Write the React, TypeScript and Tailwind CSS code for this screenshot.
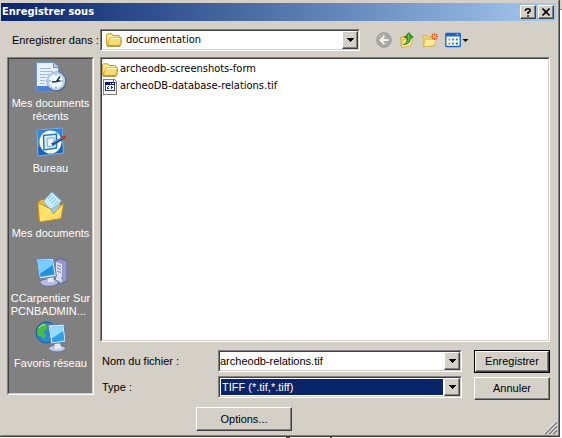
import React, { useState } from "react";

const sunken =
  "border border-t-[#808080] border-l-[#808080] border-r-white border-b-white";
const sunkenInner =
  "border border-t-[#404040] border-l-[#404040] border-r-[#d4d0c8] border-b-[#d4d0c8] bg-white";
const raised =
  "border border-t-white border-l-white border-r-[#404040] border-b-[#404040] bg-[#d4d0c8] shadow-[inset_-1px_-1px_0_#808080]";
const smallText = "font-['Liberation_Sans',Arial,sans-serif] text-[11px]";
const wideText =
  "font-['DejaVu_Sans_Condensed','DejaVu_Sans',Tahoma,sans-serif] text-[11px]";

function FolderIcon() {
  return (
    <svg width="16" height="16" viewBox="0 0 16 16" aria-hidden="true" className="shrink-0">
      <path d="M.6 3.2Q.6 1.8 2 1.8h3.6l1.6 1.7h5.6q1 0 1 1v1.2h1.4q.7 0 .6.8l-1 6.6q-.1 1-1.2 1H2q-1.4 0-1.4-1.4Z" fill="#e9bd3d" stroke="#b88a1c" strokeWidth=".8" />
      <path d="M1.2 3.3q0-.8.8-.8h3.3L7 4.2h6v1.500H4L1.4 11Z" fill="#fff0a0" />
      <path d="M3.7 5.8h11.5L14 12.7q-.1.7-.8.7H1.6Z" fill="#fbdc70" stroke="#c99c2c" strokeWidth=".6" />
      <path d="M4.4 6.500h9.9" stroke="#fff8c8" />
      <path d="M1 14.2h12.6" stroke="#8d6b18" strokeWidth=".8" />
    </svg>
  );
}

function TifIcon() {
  return (
    <svg width="16" height="16" viewBox="0 0 16 16" aria-hidden="true" className="shrink-0" shapeRendering="crispEdges">
      <path d="M1 0h11l3 3v13H1Z" fill="#808080" />
      <path d="M2 1h9v3h3v11H2Z" fill="#f6f6f4" />
      <path d="M12 1v2h2Z" fill="#fff" />
      <path d="M3 3h10v9H3Z" fill="#3c4358" />
      <path d="M4 6h8v5H4Z" fill="#fff" />
      <path d="M3 3h10v3H3Z" fill="#11157c" />
      <path d="M8 4h1v1H8Zm2 0h2v1h-2Z" fill="#fff" />
      <path d="M5 8h1v2H5Zm1-1h1v1H6Zm0 2h1v1H6Zm3-2h1v3H9Zm1 1h1v1h-1Z" fill="#20268d" />
    </svg>
  );
}

function BackIcon() {
  return (
    <svg width="16" height="16" viewBox="0 0 16 16" aria-hidden="true">
      <circle cx="8" cy="8" r="7.2" fill="#a9a8a5" stroke="#93928f" />
      <path d="M3 5q2-3.5 6-3.2" stroke="#c6c5c2" fill="none" />
      <path d="M8.5 4 4.5 8l4 4M5 8h7.5" stroke="#f3f2ef" strokeWidth="1.8" fill="none" />
    </svg>
  );
}

function UpIcon() {
  return (
    <svg width="16" height="16" viewBox="0 0 16 16" aria-hidden="true">
      <path d="M1.5 5.5 5 4l1.3 1.2L12 5v8.5l-9.6 1.7Z" fill="#f6d561" stroke="#c39c2f" strokeWidth=".7" />
      <path d="M4.5 7.5 13.500 7l-2 7-9.200 1.2Z" fill="#ffec92" stroke="#d1aa40" strokeWidth=".6" />
      <path d="M4.5 12.5q4-.5 3.5-7H5.3L9.8.7l4.3 4.7h-2.8q.3 7-6.8 7.1Z" fill="#32a629" stroke="#176b17" strokeWidth=".8" />
      <path d="M9.7 2.5v5q-.4 3-2.2 4" stroke="#77d45e" fill="none" />
    </svg>
  );
}

function NewFolderIcon() {
  return (
    <svg width="16" height="16" viewBox="0 0 16 16" aria-hidden="true">
      <path d="M.7 3.500h4.5l1.2 1.6h5.7V14L1.5 14.6Z" fill="#efd069" stroke="#d2aa49" strokeWidth=".7" />
      <path d="M3.4 7.3H14l-2.3 6.5-10 .8Z" fill="#ffec9c" stroke="#d2b34f" strokeWidth=".7" />
      <path d="M12.5 1v7M9 4.5h7M10 2l5 5m0-5-5 5" stroke="#e45a26" strokeWidth="1.2" />
      <circle cx="12.5" cy="4.5" r="1.5" fill="#ffc76a" />
    </svg>
  );
}

function ViewIcon() {
  return (
    <svg width="24" height="16" viewBox="0 0 24 16" aria-hidden="true">
      <rect x=".8" y="1.5" width="14.4" height="13" rx=".6" fill="#fff" stroke="#1767ca" strokeWidth="1.4" />
      <path d="M1 1h14v3.5H1Z" fill="#1767ca" />
      <path d="M11.5 2.5h2" stroke="#8ec2ff" />
      <path d="M3.5 6.5h2v2h-2z" fill="#8497ac" />
      <path d="M7 6.5h2v2H7z" fill="#4e82d2" />
      <path d="M10.8 6.5h2v2h-2z" fill="#2c9b5a" />
      <path d="M3.5 10.5h2v2h-2z" fill="#dc6f55" />
      <path d="M7 10.5h2v2H7z" fill="#36a150" />
      <path d="M10.8 10.5h2v2h-2z" fill="#4253a5" />
      <path d="M17.500 7h6l-3 3Z" fill="#000" />
    </svg>
  );
}

function RecentIcon() {
  return (
    <svg width="32" height="32" viewBox="0 0 32 32" aria-hidden="true">
      <path d="M1.500 1.500h17l5 4.500v24h-22Z" fill="#e8f1ff" stroke="#6c94d4" />
      <path d="M18.500 1.500V6.500h5" fill="#b8d0f4" stroke="#6c94d4" />
      <path d="M5 7.500h11M5 10.500h13M5 13.500h9M5 16.500h6M5 19.500h5M5 22.500h5" stroke="#9cbbec" />
      <path d="M2 25h11l5 5H2Z" fill="#4f7fd4" />
      <circle cx="21.500" cy="20.500" r="10" fill="#4a6680" />
      <circle cx="21" cy="20" r="9.300" fill="#b4d0e2" />
      <circle cx="21" cy="20" r="7.200" fill="#eef8ff" />
      <path d="m25 15.500-3.500 5-4.500.5m4.500-.5 4-.8" stroke="#20364b" strokeWidth="1.500" fill="none" />
      <path d="M21 13v1.500m0 11V27M14 20h1.500m11 0H28" stroke="#597994" />
    </svg>
  );
}

function DesktopIcon() {
  return (
    <svg width="32" height="32" viewBox="0 0 32 32" aria-hidden="true">
      <path d="m2 4 25-2 1.500 25L3 30Z" fill="#1764bc" stroke="#6bb6f5" />
      <path d="m3 5 23-2 .5 6L3 21Z" fill="#328ae0" />
      <ellipse cx="15.500" cy="16" rx="11" ry="11.500" fill="#fff8d6" />
      <path d="m8.500 9.500 13-1.500v14l-12.500 2Z" fill="#d8ecff" stroke="#237ac0" strokeWidth="1.500" />
      <path d="m12 12.500 7-.8v8l-6.500 1Z" fill="#eef7ff" stroke="#75acd9" />
      <path d="m17 18.500 11-6.500" stroke="#194982" strokeWidth="3" />
      <path d="m18 17 9-5" stroke="#65a3df" />
      <path d="m27 12.500 3.500-2" stroke="#c43a21" strokeWidth="3.500" />
    </svg>
  );
}

function DocumentsIcon() {
  return (
    <svg width="32" height="32" viewBox="0 0 32 32" aria-hidden="true">
      <path d="m3 11 4-3 5 3 14 2v15L4 30Z" fill="#f2bc36" stroke="#b77e1b" />
      <path d="M8 10.500 17 .8l9.500 9.200L17 20Z" fill="#caeaff" stroke="#6aabd8" />
      <path d="m13 8 4-4m-2 6 4-4m-2 6 4-4m-2 6 4-4" stroke="#81bfe8" />
      <path d="m14 19 7-5 4 2-6 6Z" fill="#8bc7ef" />
      <path d="m3 12 13 6 2 5 10.500-10.500-2.500 15L4.500 31Z" fill="#ffdf66" stroke="#c99224" />
      <path d="m16 20 5-4 2 1.500-5 5Z" fill="#95cff0" />
      <path d="m4.500 14 10.500 5-9.500 10" fill="none" stroke="#fff3a5" />
    </svg>
  );
}

function ComputerIcon() {
  return (
    <svg width="32" height="32" viewBox="0 0 32 32" aria-hidden="true">
      <path d="m20 5 5-2.500 7 3v19l-6 4-6-3Z" fill="#9698ca" stroke="#5e629b" />
      <path d="m21 6 6 2v18l-6-2Z" fill="#d9def1" />
      <path d="m22 9 4 1.500m-4 1.500 4 1.500m-4 1.500 4 1.500" stroke="#7980b5" />
      <ellipse cx="14" cy="26.500" rx="9" ry="3.800" fill="#b5bddb" stroke="#6571a5" />
      <path d="M12 19h6l1 7h-6Z" fill="#e4e9f7" />
      <path d="m1.500 3 17-.5 3 18-17 2.500Z" fill="#d5e2f7" stroke="#657baa" />
      <path d="m3 4.500 14-.5 2.500 14.500-14 2.500Z" fill="#2292df" />
      <path d="m3 4.500 14-.5.800 5L4.500 18Z" fill="#77cdff" />
      <circle cx="27" cy="22" r="1" fill="#41bf5e" />
    </svg>
  );
}

function NetworkIcon() {
  return (
    <svg width="32" height="32" viewBox="0 0 32 32" aria-hidden="true">
      <circle cx="11.500" cy="11.500" r="10.500" fill="#238ad7" stroke="#165a9a" />
      <path d="M8 2q-8 5-5 13 3-1 6 4l2-5-3-3 4-3V4Zm8 1 5 5-3 4-3-4Z" fill="#4abc3e" />
      <path d="M4 7q3-4 6-3" stroke="#b0ebc0" fill="none" />
      <ellipse cx="22" cy="27.500" rx="8.500" ry="3.500" fill="#c0c7df" stroke="#626d9b" />
      <path d="M19 21h6l1 7h-6Z" fill="#e4e9f6" />
      <path d="m13 4 16-1 2 18-15 2Z" fill="#dce9fa" stroke="#60789f" />
      <path d="m14.500 6 13-1 2 14.500-12 2Z" fill="#2fa2e6" />
      <path d="m14.500 6 13-1 .7 5L16 18Z" fill="#95dbff" />
    </svg>
  );
}

const places = [
  { lines: ["Mes documents", "récents"], Icon: RecentIcon },
  { lines: ["Bureau"], Icon: DesktopIcon },
  { lines: ["Mes documents"], Icon: DocumentsIcon },
  { lines: ["CCarpentier Sur", "PCNBADMIN..."], Icon: ComputerIcon },
  { lines: ["Favoris réseau"], Icon: NetworkIcon },
];

function DropArrow() {
  return (
    <svg width="7" height="4" viewBox="0 0 7 4" aria-hidden="true" shapeRendering="crispEdges">
      <path d="M0 0h7v1H0ZM1 1h5v1H1ZM2 2h3v1H2ZM3 3h1v1H3Z" />
    </svg>
  );
}

function DropFace() {
  return (
    <span className={`pointer-events-none flex w-4 shrink-0 items-center justify-center ${raised}`}>
      <DropArrow />
    </span>
  );
}

export default function App() {
  const [name, setName] = useState("archeodb-relations.tif");
  return (
    <div className="min-h-screen bg-white">
      <div className="flex">
        <main className={`min-w-0 flex-1 border-r border-b border-[#404040] bg-[#d4d0c8] text-black ${smallText}`}>
          <div className="border-t border-l border-r border-b border-t-[#d4d0c8] border-l-[#d4d0c8] border-r-[#808080] border-b-[#808080]">
            <header className="mt-0.5 mr-0.5 flex h-[18px] items-center gap-0.5 bg-linear-to-r from-[#0a246a] to-[#a6caf0] pr-0.5 pl-px">
              <h1 className={`flex-1 font-bold text-white ${wideText}`}>Enregistrer sous</h1>
              <button type="button" aria-label="Aide" className={`flex h-3.5 w-4 items-center justify-center ${raised}`}>
                <svg width="8" height="9" viewBox="0 0 8 9" aria-hidden="true">
                  <path d="M1.500 3V2Q2 .8 4 .8T6.300 2.500Q6.300 3.500 4 4.500V6M4 7.200v1.500" stroke="#000" strokeWidth="1.600" fill="none" />
                </svg>
              </button>
              <button type="button" aria-label="Fermer" className={`flex h-3.5 w-4 items-center justify-center ${raised}`}>
                <svg width="8" height="8" viewBox="0 0 8 8" aria-hidden="true">
                  <path d="m.5.5 7 7m0-7-7 7" stroke="#000" strokeWidth="1.600" />
                </svg>
              </button>
            </header>

            <div className="flex items-center pt-2 pl-[11px]">
              <label htmlFor="folder" className="w-[88px] whitespace-nowrap">Enregistrer dans :</label>
              <div className={`min-w-0 flex-1 ${sunken}`}>
                <div className={`flex h-5 items-stretch ${sunkenInner}`}>
                  <span className="flex items-center pl-1"><FolderIcon /></span>
                  <select id="folder" className={`min-w-0 flex-1 appearance-none bg-transparent pl-1 outline-none ${wideText}`}>
                    <option>documentation</option>
                  </select>
                  <DropFace />
                </div>
              </div>
              <div className="flex w-[198px] items-center gap-[7px] pl-4">
                <button type="button" aria-label="Précédent" disabled><BackIcon /></button>
                <button type="button" aria-label="Dossier parent"><UpIcon /></button>
                <button type="button" aria-label="Nouveau dossier"><NewFolderIcon /></button>
                <button type="button" aria-label="Affichage"><ViewIcon /></button>
              </div>
            </div>

            <div className="flex gap-1.5 pt-1.5 pr-2 pl-1.5">
              <nav className={`h-[338px] w-[87px] shrink-0 ${sunken}`}>
                <div className="h-full border border-t-[#404040] border-l-[#404040] border-r-[#d4d0c8] border-b-[#d4d0c8] bg-[#808080] pt-0.5 text-white">
                  {places.map(({ lines, Icon }, i) => (
                    <button key={i} type="button" className="flex h-[65px] w-full flex-col items-center gap-1 leading-[13px] whitespace-nowrap">
                      <Icon />
                      <span className="text-left">
                        {lines.map((line) => (
                          <span key={line} className={`block ${i === 0 ? "text-center" : ""}`}>{line}</span>
                        ))}
                      </span>
                    </button>
                  ))}
                </div>
              </nav>

              <div className="min-w-0 flex-1">
                <div className={sunken}>
                  <ul className={`h-[283px] pt-0.5 ${sunkenInner} ${wideText}`}>
                    <li className="flex h-[17px] items-center gap-0.5"><FolderIcon />archeodb-screenshots-form</li>
                    <li className="flex h-[17px] items-center gap-0.5"><TifIcon />archeoDB-database-relations.tif</li>
                  </ul>
                </div>

                <div className="flex gap-3 pt-2">
                  <div className="flex min-w-0 flex-1 flex-col gap-1">
                    <div className="flex items-center">
                      <label htmlFor="filename" className="w-[118px] pl-0.5">Nom du fichier :</label>
                      <div className={`min-w-0 flex-1 ${sunken}`}>
                        <div className={`flex h-5 ${sunkenInner}`}>
                          <input id="filename" value={name} onChange={(e) => setName(e.target.value)} className="min-w-0 flex-1 bg-transparent outline-none" />
                          <button type="button" aria-label="Noms récents" className="flex"><DropFace /></button>
                        </div>
                      </div>
                    </div>
                    <div className="flex items-center">
                      <label htmlFor="filetype" className="w-[118px] pl-0.5">Type :</label>
                      <div className={`min-w-0 flex-1 ${sunken}`}>
                        <div className={`flex h-5 ${sunkenInner}`}>
                          <select id="filetype" className="m-px min-w-0 flex-1 appearance-none bg-[#0a246a] pl-px text-white outline-none">
                            <option>TIFF (*.tif,*.tiff)</option>
                          </select>
                          <DropFace />
                        </div>
                      </div>
                    </div>
                  </div>
                  <div className="flex w-[76px] flex-col gap-1">
                    <div className="border border-black"><button type="button" className={`h-[21px] w-full ${raised}`}>Enregistrer</button></div>
                    <button type="button" className={`h-[23px] w-full ${raised}`}>Annuler</button>
                  </div>
                </div>
              </div>
            </div>

            <footer className="flex items-end justify-between pt-[7px] pl-[195px]">
              <button type="button" className={`mb-1 h-6 w-24 ${raised}`}>Options...</button>
              <svg width="14" height="14" viewBox="0 0 14 14" aria-hidden="true">
                <path d="M1 13 13 1M5 13l8-8M9 13l4-4" stroke="#808080" strokeWidth="1.800" />
                <path d="M0 12.500 12.500 0M4 12.500 12.500 4M8 12.500 12.500 8" stroke="#fff" />
              </svg>
            </footer>
          </div>
        </main>
        <div className="w-0.5 shrink-0">
          <div className="h-2.5 border-b border-[#808080] bg-[#d4d0c8]" />
        </div>
      </div>
      <div className="flex h-px justify-center gap-10 pl-14" aria-hidden="true">
        <span className="w-1 bg-[#404040]" />
        <span className="w-0.5 bg-[#404040]" />
      </div>
    </div>
  );
}
